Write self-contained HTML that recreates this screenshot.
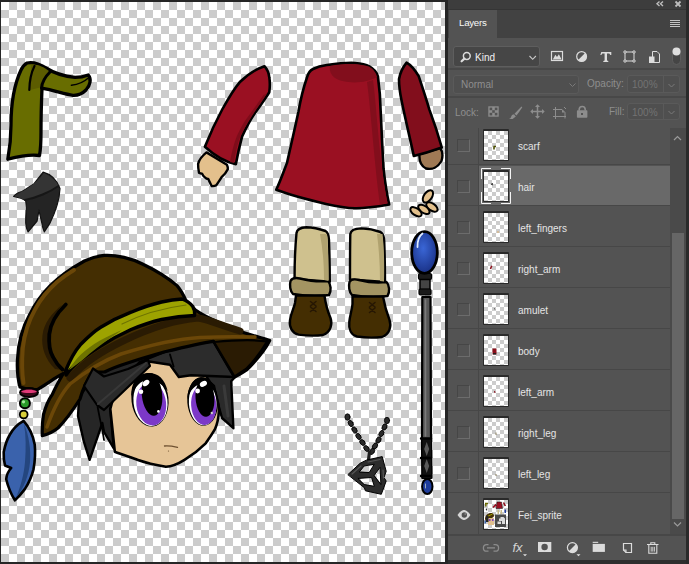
<!DOCTYPE html>
<html><head><meta charset="utf-8">
<style>
*{margin:0;padding:0;box-sizing:border-box}
html,body{width:689px;height:564px;overflow:hidden;background:#262626;font-family:"Liberation Sans",sans-serif}
.a{position:absolute}
#canvas{left:1px;top:2px;width:444px;height:560px;background:conic-gradient(#ccc 0 25%,#fff 0 50%,#ccc 0 75%,#fff 0) 0 0/16px 16px;overflow:hidden}
#panel{left:448px;top:0;width:241px;height:564px;background:#535353}
.txt{font-size:10px;color:#e4e4e4;white-space:nowrap;line-height:12px}
.sep{left:0;width:222px;height:1px;background:#474747}
.row{left:31px;width:191px;height:40px}
.thumb{left:35px;width:26px;height:32px;background:#2a2a2a;padding:2px 1px 1px 1px;border-radius:1px}
.thumb i{display:block;width:100%;height:100%;background:conic-gradient(#ccc 0 25%,#fff 0 50%,#ccc 0 75%,#fff 0) 0 0/8px 8px;position:relative}
.cb{left:9px;width:13px;height:13px;border-top:1px solid #464646;border-left:1px solid #464646;border-right:1px solid #6c6c6c;border-bottom:1px solid #6c6c6c}
.lbl{left:70px}
</style></head><body>
<div id="canvas" class="a"></div>
<!--ART--><svg class="a" style="left:0;top:0" width="445" height="562" viewBox="0 0 445 562">
<g stroke-linejoin="round" stroke-linecap="round">
<!-- SCARF -->
<path d="M27,63 C32,62 39,63.5 46,68 C53,72.5 62,76 75,77.4 C81,77.4 85,76.3 88.3,75 C91.5,78.5 90.5,85 86,90 C82,94 77,95.5 73,95.3 C65,94.5 55,90.5 42,88.2 C41.5,100 41,118 41,132 C41,142 40.5,150 39.5,155.5 C30,154 20,156 7.8,159.2 C9.5,150 11,138 11,125 C11,105 14,85 21,70 C23,66 25,64 27,63 Z" fill="#686d00" stroke="#000" stroke-width="3.3"/>
<path d="M31,64.5 C38,64 44,67 49,71 C45,76 42.5,81 42,87 L30,90 C30,80 31.5,72 31,64.5 Z" fill="#5c5c00"/>
<path d="M50,72 C45,77 42,82 41.5,88" fill="none" stroke="#000" stroke-width="3"/>
<path d="M34.5,66 C31,73 29.5,80 29.3,90" fill="none" stroke="#000" stroke-width="2.2"/>
<path d="M71.4,85.3 C78,84.5 84,82 88,78.3" fill="none" stroke="#000" stroke-width="1.4"/>
<!-- HAIR PIECE -->
<path d="M43.1,172.2 C50,174 56,178 60,188.5 C59.5,200 55,213 49.8,223.4 L44.3,231.9 C43,228 42,226 41.9,223.4 L38.9,210.2 C38.5,214 37.5,218 37.1,221 L28.1,231.9 C26,228 25.5,224 25.7,219.8 C26,214 26.3,210 26.3,207.8 L25.7,200.5 C22,198 17,197 13.6,196.3 C16,193.5 19,192 22,191.5 C26,189 30,186.5 34.1,183.7 Z" fill="#242424" stroke="#111" stroke-width="1.2"/>
<path d="M14,196 C24,191 36,184 44,173 C50,176 56,180 58.5,186 C50,192 38,198 25.7,200.5 C21,198 17,197 14,196 Z" fill="#343434"/>
<path d="M25,200 C36,198 50,192 58.5,186" fill="none" stroke="#161616" stroke-width="2"/>

<!-- ===== HEAD ===== -->
<!-- back hair left -->
<path d="M93,368.8 L104.6,370 L127.6,362 L146,354 L150,370 L140,385 L120,395 L110.3,409 L113.8,448.3 L104,432 L102.3,423 L97.6,436.8 L89.6,459.8 L83.8,441.4 L78,416 L79.2,396.5 L90.7,381.5 Z" fill="#262626" stroke="#000" stroke-width="2.4"/>
<path d="M97.6,406.8 C100,420 103,432 104,440" fill="none" stroke="#000" stroke-width="1.8"/>
<!-- back hair right -->
<path d="M200,360 L236,376 L231.2,381.3 L233.4,428.2 L222,418 L217.5,402 L214,386 L205,378 Z" fill="#2a2a2a" stroke="#000" stroke-width="2.4"/><path d="M224,386 L228,416" stroke="#3a3a3a" stroke-width="3"/>
<!-- face -->
<path d="M110.3,409 C113,395 122,380 140,362 L195,360 C208,378 218,392 219,410 C218.5,420 216.5,426 214.7,429.7 C211,436 208,440 205.4,443.6 C198,451 191,456 184.5,459.9 C178,464 172,466.5 165.9,466.8 C156,465 147,463 138,459.9 C130,457 122,454.5 114.8,451.7 C113.5,440 112,425 110.3,409 Z" fill="#e6c597" stroke="#000" stroke-width="2.6"/>
<!-- eyes -->
<g transform="rotate(-6 150 399.8)">
<ellipse cx="150" cy="399.8" rx="18.5" ry="26.8" fill="#000"/>
<ellipse cx="150.3" cy="401.5" rx="17" ry="24.5" fill="#fff"/>
<ellipse cx="150.8" cy="404" rx="14.9" ry="21.6" fill="#7c38c8"/>
<ellipse cx="152.5" cy="395" rx="10.2" ry="21" fill="#000"/>
<path d="M131.5,395 C133,380 140,373 150,372.9 C160,373 167,380 168.5,393 C162,383 156,380 150,380 C143,380 137,384 131.5,395 Z" fill="#000"/>
</g>
<ellipse cx="146" cy="383" rx="3.8" ry="2.6" fill="#fff" transform="rotate(-40 146 383)"/>
<circle cx="141" cy="391.8" r="2.3" fill="#fff"/>
<circle cx="158.4" cy="411.4" r="1.3" fill="#fff"/>
<g transform="rotate(-4 202.6 401.6)">
<ellipse cx="202.6" cy="401.6" rx="15.3" ry="24.3" fill="#000"/>
<ellipse cx="202.6" cy="403" rx="13.8" ry="22.3" fill="#fff"/>
<ellipse cx="203.5" cy="405" rx="12.6" ry="20" fill="#7c38c8"/>
<ellipse cx="205.2" cy="398" rx="9.4" ry="19" fill="#000"/>
<path d="M187.4,398 C189,386 195,377.3 202.6,377.3 C210,377.3 216,385 217.9,396 C212,387 207,384 202.6,384 C197,384 191,389 187.4,398 Z" fill="#000"/>
</g>
<ellipse cx="203.4" cy="383.8" rx="3.8" ry="2.6" fill="#fff" transform="rotate(-30 203.4 383.8)"/>
<circle cx="197.6" cy="391" r="2.4" fill="#fff"/>
<circle cx="211.8" cy="413" r="1.2" fill="#ccc"/>
<path d="M164.5,446 C169,445.5 173,446.3 177.5,447.3" fill="none" stroke="#6e5030" stroke-width="1.3"/><circle cx="168.5" cy="451" r="0.6" fill="#6e5030"/>
<!-- bangs under brim -->
<path d="M140,362 L164.8,351.8 L199.7,343 L213.6,341.3 L234.5,377 L191,375.3 L178.8,377 L170,364.8 L145.7,361 Z" fill="#2c2c2c" stroke="#000" stroke-width="2.4"/>
<path d="M170,354.4 L173.6,366.6" stroke="#000" stroke-width="1.8"/>


<!-- HAT -->
<path d="M20,387 C17.5,378 17,368 17.4,360 C18,345 21,330 29.8,314.4 C36,302 44,292 50,286 C58,278 70,269 84.4,261 C92,257.5 98,256 104.2,255.4 C111,255 118,256 124,257.4 C131,259 137,261 143.5,264.5 C155,270 168,278 177,285.6 C181,290 183,294 186,300.6 C192,309 200,315 236.5,330 C250,335 262,338 269.7,340.5 C266,348 260,356.5 247,369.7 C242,373 238,375.5 234.5,377 L213.6,341.3 C200,343 180,348 164.8,351.8 C150,356 140,359 130,362.2 C118,366 110,369 104.6,372 L93,372 C87,380 83,388 80,399 C73,410 65,421 58,428 C53,432 48,434.5 42.3,435.6 C42,428 42.5,421 43.5,414.5 C46,405 49,399 52.2,394.6 C56,386 59.5,380 63.4,373.5 C60,375 57,377 54.7,378.4 C48,383 42,387 37.3,389.6 C30,390 25,389 20,387 Z" fill="#442e02" stroke="#000" stroke-width="3.2"/>
<!-- lighter stripes -->
<path d="M70,378 C85,362 100,352 125,340 C150,328 175,320 198,318 C210,320 220,325 240,331" fill="none" stroke="#2a1b03" stroke-width="7"/>
<path d="M47,427 C53,410 60,395 70,384 C90,368 105,360 121,354 C150,345 175,339 200,337.5 C220,336.5 240,336.5 255,337" fill="none" stroke="#6b4708" stroke-width="3.5"/>
<path d="M23.5,383 C21.8,372 21.8,360 22.8,348 C24.5,333 28.5,321 35,309.5 C40.5,299 48,290 57,282 C63,277 68,273.5 74,270" fill="none" stroke="#6b4708" stroke-width="4" stroke-linecap="round"/>
<!-- under brim dark -->
<path d="M214,342 C235,340 255,339.5 267,341.5 C262,350 255,360 246,369 C240,373 237,375 234.5,376.5 Z" fill="#2a1b03" stroke="#000" stroke-width="2.2"/>
<!-- crease -->
<path d="M62,305 C52,313 44,323 42.5,335 C41,347 45,359 55,369 L63,370 C54,359 49,347 50,334 C51,322 56,312 62,305 Z" fill="#2a1b03"/>
<path d="M65.8,304.5 C57,313 50.5,323 49.3,334.3 C48.5,345 50,352 53,357 C55.5,362 58.5,366 62.5,369.5" fill="none" stroke="#000" stroke-width="3.8"/>
<!-- band -->
<path d="M65.5,371 C69.5,361 74,352 80.3,344.8 C87,338 93,332 100.7,327.3 C110,321.5 120,316.5 131.1,312.2 C141,308 151,304.5 161.6,302 C169,300.3 176,299.3 182,299 C186.5,300.5 190,303 192.6,306.2 C194.3,309 195,312.5 194.6,315.5 C183,316 172,317.5 161.6,319.5 C151,322 141,325.5 131.1,329.5 C120,334.5 110,340 100.7,346 C93,351 86,355.5 80.3,360 C75,364.5 70,369.5 66.1,375 Z" fill="#9da300" stroke="#000" stroke-width="3.4"/>
<path d="M69,370 C75,359 85,349 100,340.5 C108,336 115,333 122,330 C110,338 95,349 86,357 C79,363 73,367.5 69,370 Z" fill="#6e7400"/>
<path d="M122,324 C140,315 163,308 186,305" fill="none" stroke="#6e7400" stroke-width="1.2"/>
<!-- bang over brim edge -->
<path d="M84,386 L93,368.5 L104,376.5 L128,369 L148,360 L150,366 L104,410 L97,405 Z" fill="#2a2a2a" stroke="#000" stroke-width="2.2"/>
<path d="M98,404 L146,363" stroke="#383838" stroke-width="2"/>
<!-- beads -->
<ellipse cx="29" cy="392.5" rx="9" ry="4.4" fill="#3a0a1a" stroke="#000" stroke-width="2"/>
<path d="M21,391.5 C24,389 34,389 37,391.5 C35,393.5 23,393.5 21,391.5 Z" fill="#e03a78"/>
<circle cx="24.9" cy="403.3" r="5" fill="#2a9a2a" stroke="#000" stroke-width="2"/>
<circle cx="23.5" cy="401.8" r="1.6" fill="#a8e8a0"/>
<circle cx="23.7" cy="414.5" r="3.9" fill="#d8cf3a" stroke="#000" stroke-width="1.8"/>
<!-- feather -->
<path d="M23.6,420.9 C29,427 33,435 34.7,444.4 C35.5,452 35,461 33.5,469.3 C31.5,477 28.5,483.5 24.8,489.1 C21.5,493.5 18,497.5 14.9,500.3 C11,494 8,486.5 6.2,479.2 C6.5,475 8.5,471 11.2,468 L5,465.5 C3.8,461 3.5,456.5 3.7,451.9 C5,445.5 7,439.5 9.9,434.5 C13,429 18,424 23.6,420.9 Z" fill="#3a62ac" stroke="#000" stroke-width="2.6"/>
<path d="M24,424 C29,435 31,450 30,462 C29,475 24,488 16,498 C20,488 24,475 25,462 C26,448 26,436 24,424 Z" fill="#24467f"/>
<!-- ROBE -->
<path d="M306.9,77.7 C308,73 310,70.5 313,69 C317,67 321,65.8 326.8,65 C338,63.5 348,62.5 355,63 C362,63.5 366,64.5 369.3,66.4 C374,69 376.5,72 377.9,76.3 C379.5,88 380.5,100 380.7,111.8 C381.5,130 382.5,150 383.5,168.5 C385,182 387,195 389.2,204.5 C375,207 365,208.5 355,208.3 C345,208 335,206 326,204 C305,199 290,195 276.2,189.8 C280,182 283.5,172 287,162.9 C291,145 295,128 298.4,111.8 C301,97 304,86 306.9,77.7 Z" fill="#9a1022" stroke="#000" stroke-width="2.6"/>
<path d="M330,66 C345,63 360,63.5 369,66.5 C374,69.5 376,73 377,77 C365,84 345,84 335,78 C331,75 329,70 330,66 Z" fill="#820e1c"/>
<path d="M373,80 C377,110 379,160 387.5,203 L380,204.5 C375,170 371,112 367,82 Z" fill="#820e1c"/>
<!-- LEFT ARM (sleeve + hand) -->
<path d="M206.5,152.4 C202,156 199,160 198.1,163.9 C198,167 198.5,170 199,172.8 C200,173.5 201.5,173.7 202.1,173.7 C203,175.5 204,176.8 204.8,177.2 C206,178.5 207,179 208.3,179 C209.5,181.5 210.5,184 211.8,186.1 C213.5,186.3 215,186 216.3,185.2 C218,182.5 220,180 221.6,177.2 C224,175 226.5,172 227.8,169.3 C228,167.5 227.5,166 226.9,164.8 Z" fill="#e3c08c" stroke="#000" stroke-width="2.4"/>
<path d="M264.4,66.2 C267,69 268.8,73 269.3,77.3 C270,82 270,87 269.3,92.2 C265,99 260,106 255.7,112 C250,120 246,128 242,136.8 C239.5,146 237.5,155 235.9,164.1 C225,162 215,156 204.9,146.7 C210,134 216,121 222.2,109.5 C228,99 233,90 239.6,82.3 C247,75 256,69 264.4,66.2 Z" fill="#9a1022" stroke="#000" stroke-width="2.6"/>
<path d="M267,93.5 C263,100 258,107 254,113 C249,121 243,130 240,137 C237,146 235,155 234,163 L230,162 C231.5,153 233.5,145 236.5,137 C240,129 245,120 250,114 C255,107 259.5,101 263.5,95 Z" fill="#7e0c1a"/>
<!-- RIGHT ARM -->
<path d="M419.5,154 C419,160 421,166 426,168.5 C432,170 438,167 441.5,161 C443,156 442.5,151 440,148 Z" fill="#a07a55" stroke="#000" stroke-width="2.4"/>
<path d="M406.6,62.6 C403,67 400,73 399,79.2 C399,86 400,93 401.5,100.3 C405,118 410,138 413.8,156 C422,154 432,151 441.8,147.5 C438,134 434,122 429.3,109.4 C426,98 422,86 418.7,76.1 C415,70 411,65 406.6,62.6 Z" fill="#820e1c" stroke="#000" stroke-width="2.6"/>
<!-- fingers -->
<g fill="#e3c08c" stroke="#000" stroke-width="2">
<ellipse cx="427.9" cy="196.4" rx="4" ry="7" transform="rotate(35 427.9 196.4)"/>
<ellipse cx="431.9" cy="207" rx="3.5" ry="6.5" transform="rotate(-55 431.9 207)"/>
<ellipse cx="423.9" cy="209.4" rx="3.5" ry="6.5" transform="rotate(-55 423.9 209.4)"/>
<ellipse cx="416" cy="211.8" rx="3.5" ry="6.5" transform="rotate(-55 416 211.8)"/>
</g>
<!-- LEGS -->
<g stroke="#000" stroke-width="2.4">
<path d="M296.5,233 C297,229.5 300,227.5 306.3,227.2 C313,227.3 320,229 325.5,231 C328,232.5 328.8,235 329,240 C329.5,255 329.8,268 329.8,281.8 L294.6,279 C294.5,262 295.2,247 296.5,233 Z" fill="#cfc18e"/>
<path d="M290.5,281 C292,278 296,277.6 300,278.5 C310,281 320,282 328,281 C331,284 331.5,291 329,295 C318,296.5 305,296 293,294 C290,291 289.5,285 290.5,281 Z" fill="#a39462"/>
<path d="M296,295.5 L324.4,295.5 C325.5,303 327.5,311 330.5,318 C332.5,324 331,332 323,335 C315,336 306,335.6 298.5,334.6 C292,333 289,327 290,320.2 C291,313 294,308 295,303 Z" fill="#442e02"/>
<path d="M350.3,234 C350.8,230.5 354,228.6 361,228.4 C368,228.6 375,230 380.5,232 C383,233.5 384,236 384.2,241 C384.8,256 385,269 385,282 L350,279.5 C350,263 350,248 350.3,234 Z" fill="#cfc18e"/>
<path d="M349.5,282 C351,279 355,279 359,280 C369,282.5 378,283 386.5,282 C389.5,285 390,292 387.5,296 C376,297.5 363,297 352,295 C349,292 348.5,286 349.5,282 Z" fill="#a39462"/>
<path d="M352.5,296.5 L383,296.5 C384.5,305 386.5,312 389.5,320 C391.5,326 390,334 382,337 C373,338 364,337.6 357,336.5 C351,335 348.5,329 349.3,322 C350,315 352,310 352.5,304 Z" fill="#442e02"/>
</g>
<path d="M320,234 C323,250 324,265 324,280 L328.5,281 C328.5,262 328,248 327,234 Z" fill="#b0a26f"/>
<path d="M377,234 C379,250 380,265 380,281 L384,281.5 C384.5,262 384,248 382.5,234 Z" fill="#b0a26f"/>
<path d="M310.5,301.5 l5.5,4.5 m0,-4.5 l-5.5,4.5 M310.5,307 l5.5,4.5 m0,-4.5 l-5.5,4.5" stroke="#261703" stroke-width="1.5"/>
<path d="M369.5,302.5 l5.5,4.5 m0,-4.5 l-5.5,4.5 M369.5,308 l5.5,4.5 m0,-4.5 l-5.5,4.5" stroke="#261703" stroke-width="1.5"/>
<!-- STAFF -->
<defs><radialGradient id="orb" cx="0.45" cy="0.4" r="0.6"><stop offset="0" stop-color="#3a66d6"/><stop offset="1" stop-color="#1a3288"/></radialGradient></defs>
<path d="M422.3,297 L422,437 L422.3,478 L431.5,478 L431,437 L430.5,297 Z" fill="#575757" stroke="#000" stroke-width="2.2"/>
<path d="M425.5,300 L425.5,436" stroke="#7a7a7a" stroke-width="1.6"/>
<rect x="422.5" y="438" width="8.5" height="40" fill="#111"/>
<path d="M426.7,442 l2.5,7 l-2.5,7 l-2.5,-7 z M426.7,459 l2.5,7 l-2.5,7 l-2.5,-7 z" fill="#5a5a5a"/>
<path d="M421,438.5 h10 M421,458 h10 M421,476 h10" stroke="#000" stroke-width="2.4"/>
<rect x="418.5" y="273.5" width="13" height="6" rx="1.5" fill="#1a1a1a" stroke="#000" stroke-width="1.2"/>
<rect x="420" y="279.5" width="10" height="10" fill="#444" stroke="#000" stroke-width="1.5"/>
<rect x="419" y="289" width="12" height="6" rx="1.5" fill="#1a1a1a" stroke="#000" stroke-width="1.2"/>
<ellipse cx="424.5" cy="252.5" rx="12.8" ry="20.8" fill="url(#orb)" stroke="#000" stroke-width="2.8"/>
<path d="M417.5,247 C417.3,240 419,236 422.5,233.5" stroke="#e0ecff" stroke-width="1.8" fill="none"/>
<ellipse cx="427.3" cy="486.5" rx="5.2" ry="7.6" fill="#1f3d9c" stroke="#000" stroke-width="2"/><path d="M425.5,484 v4" stroke="#9ab" stroke-width="1"/>
<!-- AMULET -->
<g fill="#2a2a2a" stroke="#000" stroke-width="0.8">
<ellipse cx="347.5" cy="417" rx="2.6" ry="3.2"/><ellipse cx="350.8" cy="423.5" rx="2.3" ry="3.3" transform="rotate(-30 350.8 423.5)"/><ellipse cx="354.5" cy="430" rx="2.3" ry="3.3" transform="rotate(-35 354.5 430)"/><ellipse cx="358.5" cy="436.5" rx="2.3" ry="3.3" transform="rotate(-35 358.5 436.5)"/><ellipse cx="362.5" cy="442.5" rx="2.3" ry="3.3" transform="rotate(-40 362.5 442.5)"/><ellipse cx="366.5" cy="448.5" rx="2.3" ry="3.3" transform="rotate(-40 366.5 448.5)"/>
<ellipse cx="387" cy="420.5" rx="2.6" ry="3.2"/><ellipse cx="384.5" cy="427" rx="2.3" ry="3.3" transform="rotate(25 384.5 427)"/><ellipse cx="381.5" cy="433.5" rx="2.3" ry="3.3" transform="rotate(30 381.5 433.5)"/><ellipse cx="378.5" cy="440" rx="2.3" ry="3.3" transform="rotate(30 378.5 440)"/><ellipse cx="375" cy="446" rx="2.3" ry="3.3" transform="rotate(35 375 446)"/><ellipse cx="372" cy="451.5" rx="2.3" ry="3.3" transform="rotate(35 372 451.5)"/>
</g>
<path d="M369.5,452 L368.5,460" stroke="#1e1e1e" stroke-width="3.2"/>
<path fill-rule="evenodd" fill="#2c2c2c" stroke="#000" stroke-width="1" d="M348.1,474.4 L360.1,463.3 L366.3,460.2 L382.2,456.6 L386.2,471.3 L384,477.5 L386.2,481 L381.3,494.3 L365.4,490.8 L364.5,488.1 Z M359.6,471.7 L364.1,466 L374.3,464.2 L369.4,472.2 Z M358.3,478.4 L371.6,477.5 L374.3,486.3 L364.5,484.6 Z M374.3,475.3 L380,467.3 L380.9,484.1 Z"/>
<path d="M352,474 L361,466 M368,462 L380,459.5 M383,470 L383.5,478" stroke="#565656" stroke-width="1.2" fill="none"/>
</g>
</svg>
<!--/ART-->
<div id="panel" class="a">
  <div class="a" style="left:0;top:0;width:241px;height:10px;background:#3d3d3d;border-bottom:1px solid #353535"></div>
  <svg class="a" style="left:0;top:0" width="241" height="10">
    <path d="M211.5 1.5 L209 3.8 L211.5 6 M215 1.5 L212.5 3.8 L215 6" stroke="#bdbdbd" stroke-width="1.4" fill="none"/>
    <path d="M227.5 1.5 L232.5 6.5 M232.5 1.5 L227.5 6.5" stroke="#bdbdbd" stroke-width="1.8" fill="none"/>
  </svg>
  <div class="a" style="left:0;top:10px;width:241px;height:28px;background:#424242"></div>
  <div class="a" style="left:1px;top:10px;width:48px;height:28px;background:#535353"></div>
  <div class="a txt" style="left:11px;top:17.4px;color:#f8f8f8;font-size:9.7px;letter-spacing:-0.25px">Layers</div>
  <svg class="a" style="left:0;top:0" width="241" height="40">
    <path d="M222 20.5h10M222 22.5h10M222 24.5h10M222 26.5h10" stroke="#c4c4c4" stroke-width="1"/>
  </svg>

  <!-- kind row -->
  <div class="a" style="left:5px;top:46px;width:87px;height:21px;background:#464646;border:1px solid #5e5e5e;border-radius:3px"></div>
  <div class="a txt" style="left:27px;top:51.5px;color:#f0f0f0">Kind</div>
  <svg class="a" style="left:0;top:40px" width="241" height="30">
    <g transform="translate(0,-40)">
    <circle cx="18.8" cy="56" r="3.4" stroke="#dcdcdc" stroke-width="1.5" fill="none"/>
    <path d="M16.4 58.6 L13.6 61.3" stroke="#dcdcdc" stroke-width="2.2" stroke-linecap="round"/>
    <path d="M81.5 56 L84.7 59.3 L87.9 56" stroke="#c8c8c8" stroke-width="1.1" fill="none"/>
    <rect x="103.5" y="51.5" width="11" height="9" stroke="#dcdcdc" stroke-width="1.2" fill="none"/>
    <path d="M104.8 59.6 L107.4 54.8 L109 57 L110.9 54.3 L113.6 59.6 Z" fill="#dcdcdc"/>
    <circle cx="133.6" cy="56.5" r="4.9" stroke="#dcdcdc" stroke-width="1.2" fill="none"/>
    <path d="M137.1 53 A4.9 4.9 0 0 1 130.1 60 Z" fill="#dcdcdc"/>
    <path d="M153.3 52 h10 v3 h-1 l-1 -1.4 h-2.3 v6.8 l1.3 .5 v1 h-5 v-1 l1.3 -.5 v-6.8 h-2.3 l-1 1.4 h-1 z" fill="#dcdcdc"/>
    <rect x="177" y="52" width="9" height="9" stroke="#dcdcdc" stroke-width="1" fill="none"/>
    <g stroke="#dcdcdc" stroke-width="1" fill="#535353"><circle cx="177" cy="52" r="1.2"/><circle cx="186" cy="52" r="1.2"/><circle cx="177" cy="61" r="1.2"/><circle cx="186" cy="61" r="1.2"/></g>
    <path d="M204.5 51.5 h4.5 l2.5 2.5 v8.5 h-7 z" stroke="#dcdcdc" stroke-width="1" fill="none"/>
    <rect x="201" y="56.5" width="5.5" height="6.5" fill="#dcdcdc"/>
    <rect x="224.5" y="47.5" width="8" height="17" rx="4" fill="#454545" stroke="#5e5e5e" stroke-width="1"/>
    <circle cx="228.5" cy="51.5" r="4" fill="#dedede"/>
    </g>
  </svg>
  <div class="a" style="left:0;top:68px;width:238px;height:2px;background:#484848"></div>

  <!-- blend row -->
  <div class="a" style="left:5px;top:75px;width:126px;height:19px;background:#4f4f4f;border:1px solid #5a5a5a;border-radius:3px"></div>
  <div class="a txt" style="left:13px;top:79px;color:#8e8e8e">Normal</div>
  <div class="a txt" style="left:139px;top:78px;color:#8e8e8e">Opacity:</div>
  <div class="a" style="left:179px;top:75px;width:53px;height:18px;background:#4f4f4f;border:1px solid #5a5a5a;border-radius:3px"></div>
  <div class="a" style="left:215px;top:76px;width:1px;height:16px;background:#5a5a5a"></div>
  <div class="a txt" style="left:184px;top:79px;color:#737373">100%</div>
  <div class="a" style="left:0;top:96px;width:238px;height:2px;background:#484848"></div>

  <!-- lock row -->
  <div class="a txt" style="left:7px;top:107px;color:#8e8e8e">Lock:</div>
  <div class="a txt" style="left:161px;top:106px;color:#8e8e8e">Fill:</div>
  <div class="a" style="left:179px;top:103px;width:53px;height:17px;background:#4f4f4f;border:1px solid #5a5a5a;border-radius:3px"></div>
  <div class="a" style="left:215px;top:104px;width:1px;height:15px;background:#5a5a5a"></div>
  <div class="a txt" style="left:184px;top:107px;color:#737373">100%</div>
  <svg class="a" style="left:0;top:100px" width="241" height="25">
    <g transform="translate(0,-100)" fill="#8d8d8d" stroke="#8d8d8d">
    <rect x="40.3" y="106.3" width="10.4" height="10.4" fill="#8d8d8d" stroke="none"/>
    <g stroke="none" fill="#535353"><rect x="41.6" y="107.6" width="2.6" height="2.6"/><rect x="46.8" y="107.6" width="2.6" height="2.6"/><rect x="44.2" y="110.2" width="2.6" height="2.6"/><rect x="41.6" y="112.8" width="2.6" height="2.6"/><rect x="46.8" y="112.8" width="2.6" height="2.6"/></g>
    <path d="M73.5 106.5 Q70 110 66.5 113.8 L68.5 115.6 Q72 111 74.3 107.3 Z M66 114.3 Q63.5 114.5 63 117 Q62.8 118.5 61 119 Q65 119.6 67.8 116.4 Z" stroke="none"/>
    <path d="M89.5 105.5 v12 M83.5 111.5 h12" stroke-width="1.5" fill="none"/>
    <path d="M89.5 104.3 l-2.5 2.7 h5 z M89.5 118.7 l-2.5 -2.7 h5 z M82.3 111.5 l2.7 -2.5 v5 z M96.7 111.5 l-2.7 -2.5 v5 z" stroke="none"/>
    <path d="M107.5 107 v12 M105 116.5 h13 M105 109.5 h9 l3 3 v6" stroke-width="1" fill="none"/>
    <path d="M114 109.5 l3 3 h-3 z" stroke="none"/>
    <path d="M116 107 l2 2" stroke-width="1"/>
    <path d="M131.2 110.5 v-1 a3 3 0 0 1 6 0 v1" stroke-width="1.6" fill="none"/>
    <rect x="128.9" y="110.2" width="10.5" height="7.6" rx="0.8" stroke="none"/>
    <rect x="133" y="113" width="2" height="2" fill="#535353" stroke="none"/>
    </g>
  </svg>

  <svg class="a" style="left:0;top:70px" width="241" height="55">
    <g transform="translate(0,-70)" stroke="#7a7a7a" stroke-width="1" fill="none">
    <path d="M121.5 83.5 L124.5 86.5 L127.5 83.5"/>
    <path d="M220.5 84 L223.5 87 L226.5 84"/>
    <path d="M220.5 111 L223.5 114 L226.5 111"/>
    </g></svg>
  <!-- list -->
  <div class="a" style="left:0;top:0;width:222px;height:535px;clip-path:inset(128px 0 0 0)">
<div class="a" style="left:30px;top:123px;width:1px;height:412px;background:#474747"></div>
<div class="a sep" style="top:164px"></div>
<div class="a" style="left:31px;top:166px;width:191px;height:39px;background:#696969"></div>
<div class="a sep" style="top:205px"></div>
<div class="a sep" style="top:246px"></div>
<div class="a sep" style="top:287px"></div>
<div class="a sep" style="top:328px"></div>
<div class="a sep" style="top:369px"></div>
<div class="a sep" style="top:410px"></div>
<div class="a sep" style="top:451px"></div>
<div class="a sep" style="top:492px"></div>
<div class="a thumb" style="top:129px"><i><svg class="a" style="left:0;top:0" width="22" height="27"><path d="M9.5 15.5 h2.5 M10 15.5 v3" stroke="#4a4d00" stroke-width="1.6"/></svg></i></div>
<div class="a cb" style="top:139px"></div>
<div class="a txt lbl" style="top:141px">scarf</div>
<div class="a thumb" style="top:170px"><i><svg class="a" style="left:0;top:0" width="22" height="27"><path d="M6.5 12 l2.5 -1 l-0.5 2.5 z" fill="#111"/></svg></i></div>
<div class="a cb" style="top:180px"></div>
<svg class="a" style="left:33px;top:168px" width="31" height="37">
<path d="M0.5 11 V0.5 H10 M20 0.5 H29.5 V11 M29.5 24 V35.5 H20 M10 35.5 H0.5 V24" stroke="#f4f4f4" stroke-width="1" fill="none"/></svg>
<div class="a txt lbl" style="top:182px">hair</div>
<div class="a thumb" style="top:211px"><i><svg class="a" style="left:0;top:0" width="22" height="27"><circle cx="14" cy="19" r="0.8" fill="#e0a860"/></svg></i></div>
<div class="a cb" style="top:221px"></div>
<div class="a txt lbl" style="top:223px">left_fingers</div>
<div class="a thumb" style="top:252px"><i><svg class="a" style="left:0;top:0" width="22" height="27"><path d="M6.5 15 l1.2 -3.2" stroke="#8a0e1a" stroke-width="1.6"/></svg></i></div>
<div class="a cb" style="top:262px"></div>
<div class="a txt lbl" style="top:264px">right_arm</div>
<div class="a thumb" style="top:293px"><i><svg class="a" style="left:0;top:0" width="22" height="27"><path d="M10 13.5 l1.2 0.8" stroke="#333" stroke-width="0.9"/></svg></i></div>
<div class="a cb" style="top:303px"></div>
<div class="a txt lbl" style="top:305px">amulet</div>
<div class="a thumb" style="top:334px"><i><svg class="a" style="left:0;top:0" width="22" height="27"><rect x="8.5" y="12.5" width="4" height="6" fill="#8a0e1a"/><rect x="9" y="17" width="3" height="1.5" fill="#222"/></svg></i></div>
<div class="a cb" style="top:344px"></div>
<div class="a txt lbl" style="top:346px">body</div>
<div class="a thumb" style="top:375px"><i><svg class="a" style="left:0;top:0" width="22" height="27"><path d="M10.5 14 l0.5 1.8" stroke="#8a0e1a" stroke-width="1.1"/></svg></i></div>
<div class="a cb" style="top:385px"></div>
<div class="a txt lbl" style="top:387px">left_arm</div>
<div class="a thumb" style="top:416px"><i><svg class="a" style="left:0;top:0" width="22" height="27"><path d="M12 14.5 v2.5" stroke="#8b8060" stroke-width="1"/></svg></i></div>
<div class="a cb" style="top:426px"></div>
<div class="a txt lbl" style="top:428px">right_leg</div>
<div class="a thumb" style="top:457px"><i><svg class="a" style="left:0;top:0" width="22" height="27"><path d="M12 15 v2" stroke="#8b8060" stroke-width="1"/></svg></i></div>
<div class="a cb" style="top:467px"></div>
<div class="a txt lbl" style="top:469px">left_leg</div>
<div class="a thumb" style="top:498px"><i>
<svg class="a" style="left:0;top:0" width="22" height="27" viewBox="0 0 22 27">
<path d="M1 3.5 h3 M1.8 3.5 v3" stroke="#6b6b00" stroke-width="1.4"/>
<path d="M1.5 9 l1.8 -0.8 l-0.3 2.8 z" fill="#222"/>
<path d="M9 7.5 l2.5 -2.5 l0.8 1" stroke="#9a1022" stroke-width="1.6" fill="none"/>
<path d="M13 2 h4.5 l1 6.5 h-6.5 z" fill="#9a1022" stroke="#111" stroke-width="0.5"/>
<path d="M19.5 2.5 l1.8 3.5" stroke="#8a0e1a" stroke-width="1.6"/>
<rect x="13.5" y="10" width="1.5" height="4" fill="#c9bb8a"/><rect x="16.5" y="10" width="1.5" height="4" fill="#c9bb8a"/>
<rect x="20.5" y="9.5" width="1.5" height="3.5" fill="#1f3d9c"/>
<path d="M1 19 C1 15 4 12.5 8 13 C10 14 10.5 16 9.5 17 L2 22 Z" fill="#4a3208"/>
<path d="M2.5 17 l6 -3" stroke="#9aa000" stroke-width="1"/>
<rect x="4" y="18" width="6" height="7" fill="#e0bf8e"/><rect x="5" y="19" width="1.5" height="2" fill="#7d3fc3"/><rect x="8" y="19" width="1.5" height="2" fill="#7d3fc3"/>
<rect x="2" y="16" width="2.5" height="6" fill="#262626"/>
<rect x="0.5" y="20.5" width="1.5" height="3" fill="#3a62ac"/>
<rect x="11" y="14.5" width="11" height="12.5" fill="#4a4a4a"/>
<path d="M16.5 17 h3 l1.5 1.5 v5.5 h-3 v-3 h-3 v-2.5 h1.5 z" fill="#dcdcdc"/>
<path d="M13.5 21.5 h3.5 v2.5 h-3.5 z" fill="#dcdcdc"/>
<path d="M13.5 28 h4" stroke="#ddd"/>
</svg></i></div>
<svg class="a" style="left:8px;top:509px" width="16" height="12" viewBox="0 0 16 12">
<path d="M1.5 6 C4 2 7 1 8 1 C9 1 12 2 14.5 6 C12 10 9 11 8 11 C7 11 4 10 1.5 6 Z" fill="#d6d6d6"/>
<circle cx="8.3" cy="6" r="2.7" fill="#525252"/><circle cx="9.2" cy="5" r="0.8" fill="#9a9a9a"/>
</svg>
<div class="a txt lbl" style="top:510px">Fei_sprite</div>
  </div>

  <!-- scrollbar -->
  <div class="a" style="left:222px;top:128px;width:16px;height:406px;background:#4a4a4a"></div>
  <div class="a" style="left:224px;top:233px;width:12px;height:286px;background:#666666"></div>
  <svg class="a" style="left:222px;top:128px" width="16" height="406">
    <path d="M4 12 L7.5 8.5 L11 12" stroke="#9a9a9a" stroke-width="1.2" fill="none"/>
    <path d="M4 394.5 L7.5 398 L11 394.5" stroke="#9a9a9a" stroke-width="1.2" fill="none"/>
  </svg>

  <!-- footer -->
  <div class="a" style="left:0;top:534px;width:238px;height:2px;background:#474747"></div>
  <svg class="a" style="left:0;top:536px" width="241" height="24">
    <g transform="translate(0,-536)">
    <g stroke="#8c8c8c" stroke-width="1.3" fill="none">
      <path d="M40.5 544.6 h-1.8 a3.3 3.3 0 0 0 0 6.6 h1.8"/>
      <path d="M45.5 544.6 h1.8 a3.3 3.3 0 0 1 0 6.6 h-1.8"/>
      <path d="M39 547.9 h8"/>
    </g>
    <text x="64.5" y="552" font-family="Liberation Sans" font-style="italic" font-size="13" fill="#d4d4d4" style="-webkit-font-smoothing:antialiased">fx</text>
    <path d="M75 554.3 h4 l-2 2 z" fill="#e0e0e0"/>
    <rect x="90" y="542" width="13.3" height="10" fill="#dcdcdc"/>
    <circle cx="96.6" cy="547" r="3.2" fill="#535353"/>
    <circle cx="124.4" cy="547.6" r="5" stroke="#dcdcdc" stroke-width="1.2" fill="none"/>
    <path d="M128 544 A5 5 0 0 1 120.8 551.2 Z" fill="#dcdcdc"/>
    <path d="M128.5 554.2 h4 l-2 2 z" fill="#e0e0e0"/>
    <rect x="144.7" y="541.8" width="5.5" height="1.1" fill="#dcdcdc"/>
    <rect x="144.7" y="543.9" width="12.2" height="8" fill="#dcdcdc"/>
    <path d="M175.5 543.5 h8 v9 h-5.5 l-2.5 -2.5 z" stroke="#dcdcdc" stroke-width="1.2" fill="none"/>
    <path d="M176 544 h7 v5 h-4 l-3 -2 z" fill="#dcdcdc" opacity="0"/>
    <path d="M175 550 l3 0 v3" stroke="#dcdcdc" stroke-width="1.1" fill="none"/>
    <g stroke="#dcdcdc" fill="none" stroke-width="1.1">
      <path d="M199 544.5 h11.5 M202.8 544.5 v-1.8 h4 v1.8"/>
      <path d="M200.8 545 v8.3 h8 v-8.3"/>
      <path d="M203.2 546.8 v4.8 M204.8 546.8 v4.8 M206.4 546.8 v4.8" stroke-width="0.9"/>
    </g>
    </g>
  </svg>
  <div class="a" style="left:0;top:560px;width:241px;height:4px;background:#2e2e2e"></div>
  <div class="a" style="left:238px;top:0;width:3px;height:564px;background:#2a2a2a"></div>
</div>
</body></html>
